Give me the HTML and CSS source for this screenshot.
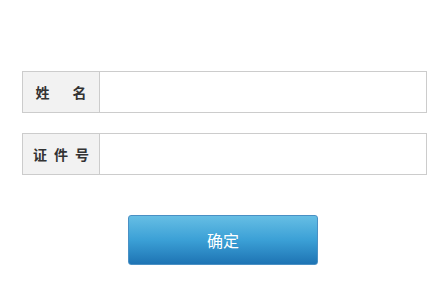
FILE: index.html
```html
<!DOCTYPE html>
<html lang="zh">
<head>
<meta charset="utf-8">
<title>表单</title>
<link rel="stylesheet" href="styles.css">
</head>
<body>
<div class="form">
  <div class="row">
    <label class="label label-wide"><span>姓</span><span>名</span></label>
    <input class="input" type="text">
  </div>
  <div class="row">
    <label class="label label-narrow"><span>证</span><span>件</span><span>号</span></label>
    <input class="input" type="text">
  </div>
  <div class="actions">
    <button class="btn" type="button">确定</button>
  </div>
</div>
</body>
</html>
```
FILE: styles.css
```css
html, body {
  margin: 0;
  padding: 0;
  background: #fff;
}
body {
  font-family: "Noto Sans CJK SC", "Liberation Sans", sans-serif;
}
.form {
  padding: 71px 0 0 22px;
  width: 405px;
  display: flex;
  flex-direction: column;
  gap: 20px;
}
.row {
  display: flex;
  height: 42px;
  box-sizing: border-box;
  border: 1px solid #cccccc;
}
.label {
  width: 77px;
  box-sizing: border-box;
  border-right: 1px solid #cccccc;
  background: #f2f2f2;
  display: flex;
  align-items: center;
  justify-content: center;
  font-size: 14px;
  font-weight: bold;
  color: #333;
}
.label-wide { gap: 23px; }
.label-narrow { gap: 7px; }
.input {
  flex: 1;
  border: 0;
  margin: 0;
  padding: 0 10px;
  outline: none;
  background: #fff;
  font-size: 14px;
}
.actions {
  display: flex;
  justify-content: center;
  padding-top: 20px;
  width: 447px;
  margin-left: -22px;
}
.btn {
  width: 190px;
  height: 50px;
  margin-left: -1px;
  border: 1px solid #4a90c4;
  border-radius: 3px;
  background: linear-gradient(to bottom, #66bee4 0%, #3ba0d6 50%, #1e74b4 100%);
  color: #fff;
  font-family: "Noto Sans CJK SC", sans-serif;
  font-size: 16px;
  cursor: pointer;
}
```
